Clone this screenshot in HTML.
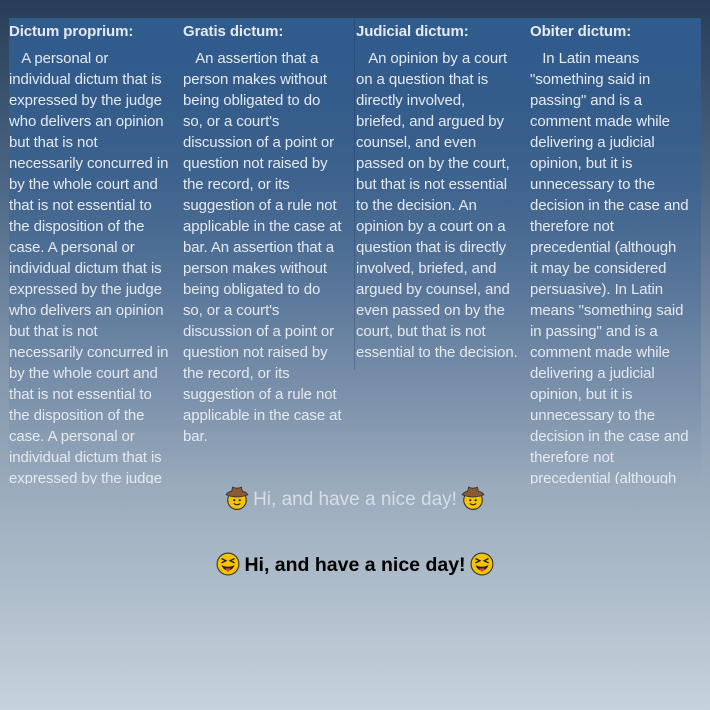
<!DOCTYPE html>
<html><head><meta charset="utf-8"><style>
html,body{margin:0;padding:0}
body{width:710px;height:710px;overflow:hidden;position:relative;font-family:"Liberation Sans",sans-serif;
background:linear-gradient(180deg,#283d57 0%,#4a6584 25%,#7f93aa 50%,#a3b3c3 75%,#c6d2dc 100%);}
.wrap{position:absolute;left:9px;top:18px;width:692px;height:466px;overflow:hidden;
background:linear-gradient(180deg,rgba(48,96,150,.85) 0%,rgba(60,100,150,.3) 65%,rgba(80,110,150,0) 100%);}
.col{position:absolute;top:2px;width:172px;color:#e6e9ee;font-size:15px;line-height:21px;white-space:nowrap;letter-spacing:-0.1px}
.col h{display:block;font-weight:bold;height:25px;line-height:24px}
.col p{margin:0;padding-top:3px}
.rule{position:absolute;left:345px;top:0;width:1px;height:352px;background:rgba(20,40,70,.25)}
.l1{position:absolute;top:486px;left:0;width:710px;text-align:center;font-size:19px;color:#d8dde3}
.l2{position:absolute;top:552px;left:0;width:710px;text-align:center;font-size:19.5px;font-weight:bold;color:#000}
.e{display:inline-block;width:24px;height:24px;vertical-align:-5px;margin:0 4px}
</style></head><body>
<div class="wrap">
<div class="rule"></div>
<div class="col" style="left:0"><h>Dictum proprium:</h><p>&nbsp;&nbsp;&nbsp;A personal or<br>individual dictum that is<br>expressed by the judge<br>who delivers an opinion<br>but that is not<br>necessarily concurred in<br>by the whole court and<br>that is not essential to<br>the disposition of the<br>case. A personal or<br>individual dictum that is<br>expressed by the judge<br>who delivers an opinion<br>but that is not<br>necessarily concurred in<br>by the whole court and<br>that is not essential to<br>the disposition of the<br>case. A personal or<br>individual dictum that is<br>expressed by the judge</p></div>
<div class="col" style="left:174px"><h>Gratis dictum:</h><p>&nbsp;&nbsp;&nbsp;An assertion that a<br>person makes without<br>being obligated to do<br>so, or a court's<br>discussion of a point or<br>question not raised by<br>the record, or its<br>suggestion of a rule not<br>applicable in the case at<br>bar. An assertion that a<br>person makes without<br>being obligated to do<br>so, or a court's<br>discussion of a point or<br>question not raised by<br>the record, or its<br>suggestion of a rule not<br>applicable in the case at<br>bar.</p></div>
<div class="col" style="left:347px"><h>Judicial dictum:</h><p>&nbsp;&nbsp;&nbsp;An opinion by a court<br>on a question that is<br>directly involved,<br>briefed, and argued by<br>counsel, and even<br>passed on by the court,<br>but that is not essential<br>to the decision. An<br>opinion by a court on a<br>question that is directly<br>involved, briefed, and<br>argued by counsel, and<br>even passed on by the<br>court, but that is not<br>essential to the decision.</p></div>
<div class="col" style="left:521px"><h>Obiter dictum:</h><p>&nbsp;&nbsp;&nbsp;In Latin means<br>"something said in<br>passing" and is a<br>comment made while<br>delivering a judicial<br>opinion, but it is<br>unnecessary to the<br>decision in the case and<br>therefore not<br>precedential (although<br>it may be considered<br>persuasive). In Latin<br>means "something said<br>in passing" and is a<br>comment made while<br>delivering a judicial<br>opinion, but it is<br>unnecessary to the<br>decision in the case and<br>therefore not<br>precedential (although</p></div>
</div>
<div class="l1"><svg class="e" viewBox="0 0 22 22"><circle cx="11" cy="13" r="8.5" fill="#f5c400" stroke="#333" stroke-width="1"/><path d="M1 8 Q11 12 21 8 Q19 5 16 5 L15 1 Q11 3 7 1 L6 5 Q3 5 1 8Z" fill="#8a5a34" stroke="#333" stroke-width=".8"/><circle cx="8.5" cy="13" r="1" fill="#222"/><circle cx="13.5" cy="13" r="1" fill="#222"/><path d="M8 16 Q11 18.5 14 16" stroke="#222" fill="none"/></svg>Hi, and have a nice day!<svg class="e" viewBox="0 0 22 22"><circle cx="11" cy="13" r="8.5" fill="#f5c400" stroke="#333" stroke-width="1"/><path d="M1 8 Q11 12 21 8 Q19 5 16 5 L15 1 Q11 3 7 1 L6 5 Q3 5 1 8Z" fill="#8a5a34" stroke="#333" stroke-width=".8"/><circle cx="8.5" cy="13" r="1" fill="#222"/><circle cx="13.5" cy="13" r="1" fill="#222"/><path d="M8 16 Q11 18.5 14 16" stroke="#222" fill="none"/></svg></div>
<div class="l2"><svg class="e" viewBox="0 0 22 22"><circle cx="11" cy="11" r="10" fill="#f5c400" stroke="#333" stroke-width="1"/><path d="M5 6 L9 8 L5 10 M17 6 L13 8 L17 10" stroke="#222" stroke-width="1.3" fill="none"/><path d="M5 12 Q11 15 17 12 Q15 17 11 17 Q7 17 5 12Z" fill="#222"/><path d="M8.5 15 Q11 21 13.5 15Z" fill="#e0405a"/></svg>Hi, and have a nice day!<svg class="e" viewBox="0 0 22 22"><circle cx="11" cy="11" r="10" fill="#f5c400" stroke="#333" stroke-width="1"/><path d="M5 6 L9 8 L5 10 M17 6 L13 8 L17 10" stroke="#222" stroke-width="1.3" fill="none"/><path d="M5 12 Q11 15 17 12 Q15 17 11 17 Q7 17 5 12Z" fill="#222"/><path d="M8.5 15 Q11 21 13.5 15Z" fill="#e0405a"/></svg></div>
</body></html>
